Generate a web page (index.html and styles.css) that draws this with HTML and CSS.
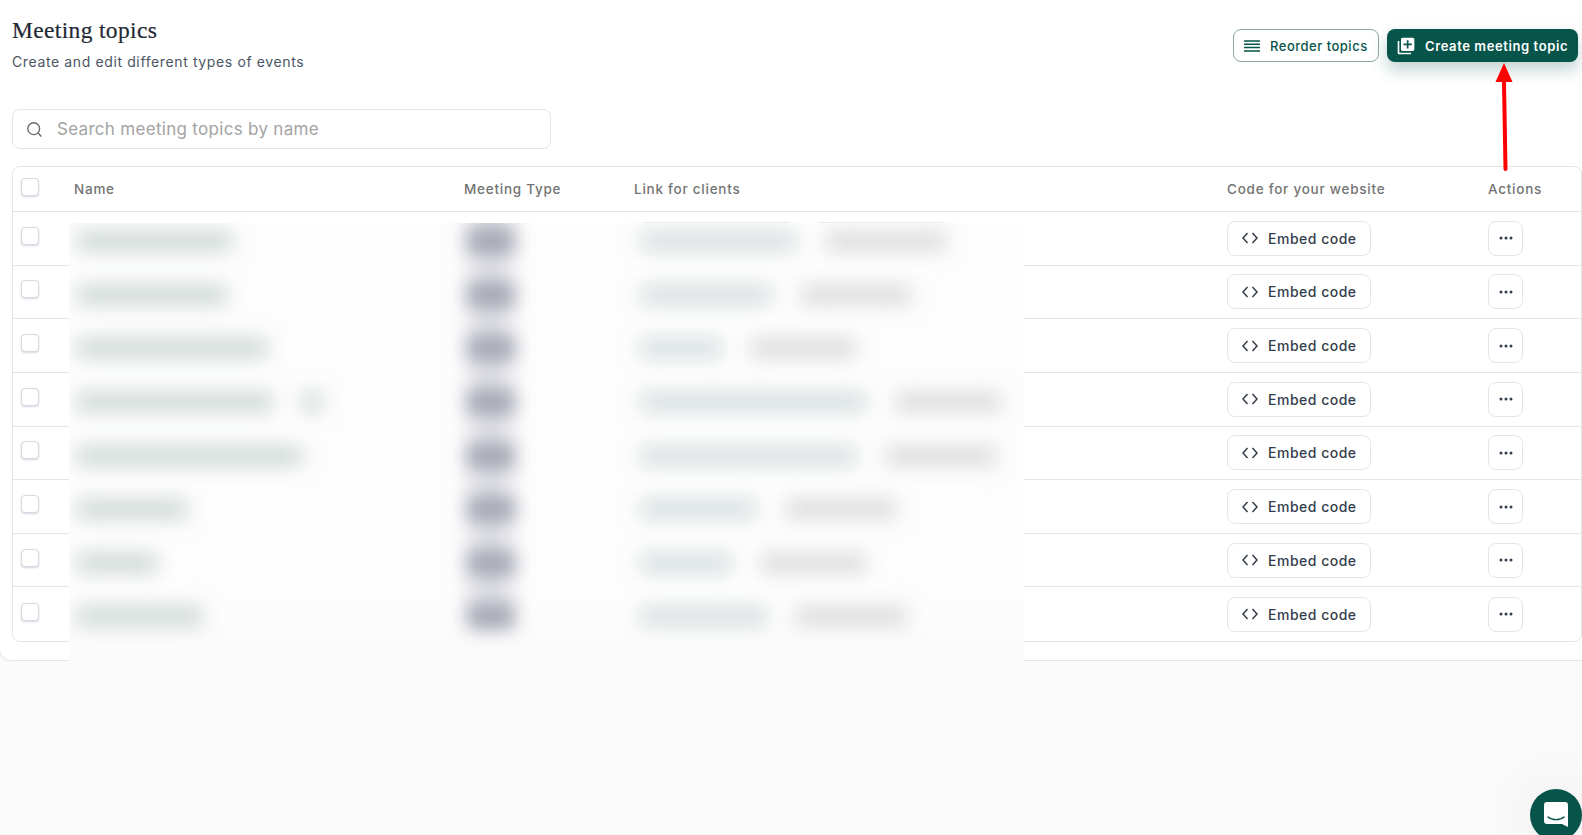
FILE: index.html
```html
<!DOCTYPE html>
<html lang="en">
<head>
    <meta charset="UTF-8">
    <meta name="viewport" content="width=device-width, initial-scale=1.0">
    <title>Meeting topics</title>
    <link rel="stylesheet" href="styles.css">
</head>
<body>
    <div class="panel">
        <div class="head">
            <div>
                <h1 class="title">Meeting topics</h1>
                <p class="subtitle">Create and edit different types of events</p>
            </div>
            <div class="head-actions">
                <button class="btn-outline">
                    <svg width="16" height="12" viewBox="0 0 16 12"><path d="M0 1h16M0 4.3h16M0 7.6h16M0 11h16" stroke="#06544a" stroke-width="1.5"/></svg>
                    Reorder topics
                </button>
                <button class="btn-primary">
                    <svg width="20" height="20" viewBox="0 0 24 24" fill="#fff"><path d="M4 6H2v14c0 1.1.9 2 2 2h14v-2H4V6zm16-4H8c-1.1 0-2 .9-2 2v12c0 1.1.9 2 2 2h12c1.1 0 2-.9 2-2V4c0-1.1-.9-2-2-2zm-1 9h-4v4h-2v-4H9V9h4V5h2v4h4v2z"/></svg>
                    Create meeting topic
                </button>
            </div>
        </div>

        <div class="search">
            <svg width="17" height="17" viewBox="0 0 17 17" fill="none" stroke="#6b6b6b" stroke-width="1.4"><circle cx="7.7" cy="7.7" r="5.9"/><path d="M12 12l3.4 3.4"/></svg>
            <span class="search-text">Search meeting topics by name</span>
        </div>

        <div class="table">
            <div class="table-row table-head">
                <div class="check"></div>
                <div>Name</div>
                <div>Meeting Type</div>
                <div>Link for clients</div>
                <div>Code for your website</div>
                <div>Actions</div>
            </div>
            <div class="table-row">
                <div class="check"></div><div></div><div></div>
                <div class="chips"><div class="chip chip-a"></div><div class="chip chip-b"></div></div>
                <div><button class="btn-embed"><svg width="16" height="12" viewBox="0 0 16 12" fill="none" stroke="#333d4b" stroke-width="1.5"><path d="M5.5 1L1 6l4.500 5M10.500 1L15 6l-4.500 5"/></svg>Embed code</button></div>
                <div><button class="btn-dots"><svg width="14" height="4" viewBox="0 0 14 4" fill="#333d4b"><circle cx="2" cy="2" r="1.500"/><circle cx="7" cy="2" r="1.500"/><circle cx="12" cy="2" r="1.500"/></svg></button></div>
            </div>
            <div class="table-row">
                <div class="check"></div><div></div><div></div><div></div>
                <div><button class="btn-embed"><svg width="16" height="12" viewBox="0 0 16 12" fill="none" stroke="#333d4b" stroke-width="1.5"><path d="M5.5 1L1 6l4.500 5M10.500 1L15 6l-4.500 5"/></svg>Embed code</button></div>
                <div><button class="btn-dots"><svg width="14" height="4" viewBox="0 0 14 4" fill="#333d4b"><circle cx="2" cy="2" r="1.500"/><circle cx="7" cy="2" r="1.500"/><circle cx="12" cy="2" r="1.500"/></svg></button></div>
            </div>
            <div class="table-row">
                <div class="check"></div><div></div><div></div><div></div>
                <div><button class="btn-embed"><svg width="16" height="12" viewBox="0 0 16 12" fill="none" stroke="#333d4b" stroke-width="1.5"><path d="M5.5 1L1 6l4.500 5M10.500 1L15 6l-4.500 5"/></svg>Embed code</button></div>
                <div><button class="btn-dots"><svg width="14" height="4" viewBox="0 0 14 4" fill="#333d4b"><circle cx="2" cy="2" r="1.500"/><circle cx="7" cy="2" r="1.500"/><circle cx="12" cy="2" r="1.500"/></svg></button></div>
            </div>
            <div class="table-row">
                <div class="check"></div><div></div><div></div><div></div>
                <div><button class="btn-embed"><svg width="16" height="12" viewBox="0 0 16 12" fill="none" stroke="#333d4b" stroke-width="1.5"><path d="M5.5 1L1 6l4.500 5M10.500 1L15 6l-4.500 5"/></svg>Embed code</button></div>
                <div><button class="btn-dots"><svg width="14" height="4" viewBox="0 0 14 4" fill="#333d4b"><circle cx="2" cy="2" r="1.500"/><circle cx="7" cy="2" r="1.500"/><circle cx="12" cy="2" r="1.500"/></svg></button></div>
            </div>
            <div class="table-row">
                <div class="check"></div><div></div><div></div><div></div>
                <div><button class="btn-embed"><svg width="16" height="12" viewBox="0 0 16 12" fill="none" stroke="#333d4b" stroke-width="1.5"><path d="M5.5 1L1 6l4.500 5M10.500 1L15 6l-4.500 5"/></svg>Embed code</button></div>
                <div><button class="btn-dots"><svg width="14" height="4" viewBox="0 0 14 4" fill="#333d4b"><circle cx="2" cy="2" r="1.500"/><circle cx="7" cy="2" r="1.500"/><circle cx="12" cy="2" r="1.500"/></svg></button></div>
            </div>
            <div class="table-row">
                <div class="check"></div><div></div><div></div><div></div>
                <div><button class="btn-embed"><svg width="16" height="12" viewBox="0 0 16 12" fill="none" stroke="#333d4b" stroke-width="1.5"><path d="M5.5 1L1 6l4.500 5M10.500 1L15 6l-4.500 5"/></svg>Embed code</button></div>
                <div><button class="btn-dots"><svg width="14" height="4" viewBox="0 0 14 4" fill="#333d4b"><circle cx="2" cy="2" r="1.500"/><circle cx="7" cy="2" r="1.500"/><circle cx="12" cy="2" r="1.500"/></svg></button></div>
            </div>
            <div class="table-row">
                <div class="check"></div><div></div><div></div><div></div>
                <div><button class="btn-embed"><svg width="16" height="12" viewBox="0 0 16 12" fill="none" stroke="#333d4b" stroke-width="1.5"><path d="M5.5 1L1 6l4.500 5M10.500 1L15 6l-4.500 5"/></svg>Embed code</button></div>
                <div><button class="btn-dots"><svg width="14" height="4" viewBox="0 0 14 4" fill="#333d4b"><circle cx="2" cy="2" r="1.500"/><circle cx="7" cy="2" r="1.500"/><circle cx="12" cy="2" r="1.500"/></svg></button></div>
            </div>
            <div class="table-row">
                <div class="check"></div><div></div><div></div><div></div>
                <div><button class="btn-embed"><svg width="16" height="12" viewBox="0 0 16 12" fill="none" stroke="#333d4b" stroke-width="1.5"><path d="M5.5 1L1 6l4.500 5M10.500 1L15 6l-4.500 5"/></svg>Embed code</button></div>
                <div><button class="btn-dots"><svg width="14" height="4" viewBox="0 0 14 4" fill="#333d4b"><circle cx="2" cy="2" r="1.500"/><circle cx="7" cy="2" r="1.500"/><circle cx="12" cy="2" r="1.500"/></svg></button></div>
            </div>
        </div>
    </div>

    <!-- blurred-out part of the table -->
    <div class="blur-cover">
        <div class="type-column"></div>
        <div class="blur-row"><div class="blob name n1"></div><div class="blob type"></div><div class="links"><div class="blob link l160"></div><div class="blob link2 l120"></div></div></div>
        <div class="blur-row"><div class="blob name n2"></div><div class="blob type"></div><div class="links"><div class="blob link l125"></div><div class="blob link2 l110"></div></div></div>
        <div class="blur-row"><div class="blob name n3"></div><div class="blob type"></div><div class="links"><div class="blob link l75"></div><div class="blob link2 l105"></div></div></div>
        <div class="blur-row"><div class="name-group"><div class="blob name n4"></div><div class="blob name n4b"></div></div><div class="blob type"></div><div class="links"><div class="blob link l220"></div><div class="blob link2 l105"></div></div></div>
        <div class="blur-row"><div class="blob name n5"></div><div class="blob type"></div><div class="links"><div class="blob link l210"></div><div class="blob link2 l110"></div></div></div>
        <div class="blur-row"><div class="blob name n6"></div><div class="blob type"></div><div class="links"><div class="blob link l110"></div><div class="blob link2 l110"></div></div></div>
        <div class="blur-row"><div class="blob name n7"></div><div class="blob type"></div><div class="links"><div class="blob link l85"></div><div class="blob link2 l105"></div></div></div>
        <div class="blur-row"><div class="blob name n8"></div><div class="blob type"></div><div class="links"><div class="blob link l120"></div><div class="blob link2 l110"></div></div></div>
    </div>

    <!-- red annotation arrow -->
    <svg class="arrow" width="24" height="112" viewBox="0 0 24 112">
        <path d="M12 19L13.500 106" stroke="#ff0000" stroke-width="4" stroke-linecap="round" fill="none"/>
        <path d="M12 0L20.500 19H3.500z" fill="#ff0000"/>
    </svg>

    <div class="chat">
        <svg width="26" height="27" viewBox="0 0 26 27">
            <path d="M4 1h18a3 3 0 0 1 3 3v22l-6-3H4a3 3 0 0 1-3-3V4a3 3 0 0 1 3-3z" fill="#fff"/>
            <path d="M5 16c4 3.500 12 3.500 16 0" fill="none" stroke="#06544a" stroke-width="1.400" stroke-linecap="round"/>
        </svg>
    </div>
</body>
</html>
```

FILE: styles.css
```css
* {
  box-sizing: border-box;
}
html, body {
  height: 100%;
}
body {
  margin: 0;
  background: #fafafa;
  font-family: "Inter", "Liberation Sans", sans-serif;
  overflow: hidden;
  position: relative;
}
button {
  font-family: inherit;
  cursor: pointer;
}

.panel {
  margin: 0 -1px;
  padding: 0 0 18px 12px;
  background: #fff;
  border: 1px solid #e5e5e5;
  border-top: 0;
  border-radius: 0 0 0 12px;
  height: 661px;
}

/* header */
.head {
  display: flex;
  justify-content: space-between;
  height: 109px;
  padding-top: 16px;
  padding-right: 4px;
}
.title {
  margin: 0;
  font-family: "Liberation Serif", serif;
  font-size: 23.5px;
  line-height: 28px;
  font-weight: 400;
  letter-spacing: 0.35px;
  color: #1f2933;
  -webkit-text-stroke: 0.2px #1f2933;
}
.subtitle {
  margin: 8px 0 0;
  font-size: 14px;
  line-height: 20px;
  letter-spacing: 0.62px;
  color: #4b5563;
}
.head-actions {
  display: flex;
  gap: 8px;
  margin-top: 13px;
  height: 33px;
}
.btn-outline, .btn-primary {
  display: flex;
  align-items: center;
  border-radius: 8px;
  font-size: 13px;
  padding: 0;
}
.btn-outline {
  width: 146px;
  padding-left: 10px;
  gap: 10px;
  background: #fff;
  border: 1px solid #8aa9a5;
  color: #06544a;
  font-weight: 500;
  letter-spacing: 0.5px;
}
.btn-primary {
  width: 191px;
  padding-left: 9px;
  gap: 9px;
  background: #06544a;
  border: 0;
  color: #fff;
  font-weight: 600;
  letter-spacing: 0.6px;
  box-shadow: 0 8px 16px rgba(6, 84, 74, 0.25);
}

/* search */
.search {
  display: flex;
  align-items: center;
  gap: 14px;
  width: 539px;
  height: 40px;
  padding-left: 13px;
  margin-bottom: 17px;
  border: 1px solid #e5e5e5;
  border-radius: 8px;
}
.search-text {
  font-size: 17px;
  letter-spacing: 0.3px;
  color: #a3a3a3;
}

/* table */
.table {
  border: 1px solid #e5e5e5;
  border-radius: 8px;
}
.table-row {
  display: grid;
  grid-template-columns: 61px 390px 170px 593px 261px 1fr;
  align-items: center;
  height: 53.65px;
  border-bottom: 1px solid #e5e5e5;
}
.table-row:last-child {
  border-bottom: 0;
}
.table-head {
  height: 45px;
  font-size: 13.5px;
  font-weight: 500;
  letter-spacing: 0.75px;
  color: #737373;
}
.check {
  width: 18px;
  height: 18px;
  margin: -5px 0 0 8px;
  background: #fff;
  border: 1px solid #d8d8de;
  border-radius: 4px;
  box-shadow: 0 1px 2px rgba(90, 90, 130, 0.25);
}
.chips {
  display: flex;
  gap: 16px;
  align-self: start;
  padding-top: 10px;
}
.chip {
  height: 30px;
  border: 1px solid #ebebeb;
  border-radius: 8px;
}
.chip-a {
  width: 159px;
  margin-left: 3px;
}
.chip-b {
  width: 137px;
}
.btn-embed, .btn-dots {
  display: flex;
  align-items: center;
  height: 35px;
  background: #fff;
  border: 1px solid #e5e5e5;
  border-radius: 8px;
  padding: 0;
  color: #333d4b;
}
.btn-embed {
  width: 144px;
  padding-left: 14px;
  gap: 10px;
  font-size: 14px;
  font-weight: 500;
  letter-spacing: 0.5px;
}
.btn-dots {
  width: 35px;
  justify-content: center;
}

/* blur cover sits over the table */
.blur-cover {
  position: absolute;
  left: 69px;
  top: 223px;
  width: 955px;
  height: 442px;
  overflow: hidden;
  background: linear-gradient(#fdfdfd 85%, #fafafa 100%);
}
.type-column {
  position: absolute;
  left: 402px;
  top: -20px;
  width: 38px;
  height: 415px;
  background: #dddee4;
  filter: blur(11px);
}
.blur-row {
  position: relative;
  display: grid;
  grid-template-columns: 391px 173px 1fr;
  align-items: center;
  height: 20px;
  margin: 5px 0 33.65px 8px;
}
.blob {
  height: 18px;
  filter: blur(10px);
}
.name {
  background: #cad5d0;
}
.name-group {
  display: flex;
  gap: 30px;
}
.type {
  width: 46px;
  height: 26px;
  background: #a4a7b3;
  filter: blur(9px);
}
.links {
  display: flex;
  gap: 30px;
}
.link {
  background: #d4dcdc;
}
.link2 {
  background: #d9d9d9;
}
.n1 { width: 155px; }
.n2 { width: 150px; }
.n3 { width: 190px; }
.n4 { width: 195px; }
.n4b { width: 20px; }
.n5 { width: 225px; }
.n6 { width: 110px; }
.n7 { width: 80px; }
.n8 { width: 125px; }
.l75 { width: 80px; }
.l85 { width: 90px; }
.l105 { width: 105px; }
.l110 { width: 115px; }
.l120 { width: 125px; }
.l125 { width: 130px; }
.l160 { width: 155px; }
.l210 { width: 215px; }
.l220 { width: 225px; }
.link2.l110 { width: 110px; }
.link2.l120 { width: 120px; }

.arrow {
  position: absolute;
  left: 1492px;
  top: 63px;
}

.chat {
  position: absolute;
  left: 1530px;
  top: 789px;
  width: 52px;
  height: 52px;
  display: flex;
  align-items: center;
  justify-content: center;
  border-radius: 50%;
  background: #06544a;
  box-shadow: 0 0 60px rgba(0, 0, 0, 0.08);
}
.chat svg {
  margin-top: -1px;
}
```
